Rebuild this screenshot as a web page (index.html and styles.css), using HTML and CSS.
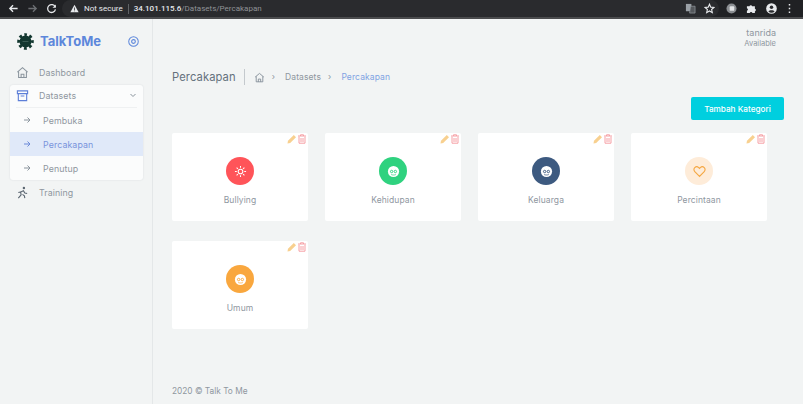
FILE: index.html
```html
<!DOCTYPE html>
<html>
<head>
    <title>TalkToMe</title>
    <link rel="stylesheet" href="styles.css">
</head>
<body>
    <div class="chrome">
        <svg class="nav-icon" viewBox="0 0 12 12"><path d="M10.500 6H2M5.500 2.500 2 6l3.500 3.500" fill="none" stroke="#e8eaed" stroke-width="1.500"/></svg>
        <svg class="nav-icon" viewBox="0 0 12 12"><path d="M1.500 6H10M6.500 2.500 10 6l-3.500 3.500" fill="none" stroke="#6b6e72" stroke-width="1.500"/></svg>
        <svg class="nav-icon" viewBox="0 0 12 12"><path d="M10 4.200A4.300 4.300 0 1 0 10.300 7" fill="none" stroke="#e8eaed" stroke-width="1.400"/><path d="M10.800 1.500v3.700H7.100z" fill="#e8eaed"/></svg>
        <div class="omnibox">
            <svg class="warn" viewBox="0 0 12 12"><path d="M6 1 11.500 11H.5z" fill="#e8eaed"/><path d="M5.500 4.500h1v3.500h-1zM5.500 8.800h1v1h-1z" fill="#2a2b2e"/></svg>
            <span class="not-secure">Not secure</span>
            <span class="omni-sep"></span>
            <span class="host">34.101.115.6</span><span class="path">/Datasets/Percakapan</span>
            <span class="omni-right">
                <svg class="chrome-icon" viewBox="0 0 12 12"><path d="M1 1h6v8H1z" fill="#9aa0a6"/><path d="M6 3.500h5V11H5z" fill="#55585c" stroke="#9aa0a6" stroke-width=".7"/></svg>
                <svg class="chrome-icon" viewBox="0 0 12 12"><path d="m6 1.300 1.400 3.200 3.500.3-2.600 2.300.8 3.400L6 8.700l-3.100 1.800.8-3.400-2.600-2.300 3.500-.3z" fill="none" stroke="#e8eaed" stroke-width="1.200"/></svg>
            </span>
        </div>
        <div class="chrome-tools">
            <svg class="chrome-icon" viewBox="0 0 12 12"><circle cx="6" cy="6" r="5.500" fill="#8b8e92"/><rect x="4" y="3.500" width="5" height="5" rx="1" fill="#e3e4e6"/></svg>
            <svg class="chrome-icon" viewBox="0 0 12 12"><path d="M1 3.500h2.800a1.500 1.500 0 0 1 2.900 0h3v2.800a1.500 1.500 0 0 1 0 2.900V11H7a1.500 1.500 0 0 0-2.900 0H1V8.500a1.500 1.500 0 0 0 0-2.900z" fill="#e8eaed"/></svg>
            <svg class="chrome-icon" viewBox="0 0 12 12"><circle cx="6" cy="6" r="5.800" fill="#e8eaed"/><circle cx="6" cy="4.600" r="1.900" fill="#2a2b2e"/><path d="M2.600 9.200c1-1.700 5.800-1.700 6.800 0a4.500 4.500 0 0 1-6.800 0z" fill="#2a2b2e"/></svg>
            <svg class="chrome-icon dots" viewBox="0 0 12 12"><path d="M5.200 1h1.600v1.800H5.200zM5.200 5.100h1.600v1.800H5.200zM5.200 9.200h1.600V11H5.200z" fill="#e8eaed"/></svg>
        </div>
    </div>

    <div class="app">
        <aside class="sidebar">
            <div class="brand">
                <svg class="logo" viewBox="0 0 20 20"><circle cx="10" cy="10" r="7" fill="#12372f"/><circle cx="10" cy="10" r="8" fill="none" stroke="#12372f" stroke-width="3.500" stroke-dasharray="3.300 2.980" stroke-dashoffset="1.650" transform="rotate(-90 10 10)"/><path d="M6.500 10h7" stroke="#4d6d64" stroke-width=".8"/></svg>
                <span class="brand-name">TalkToMe</span>
                <svg class="brand-toggle" viewBox="0 0 12 12"><circle cx="6" cy="6" r="5.200" fill="none" stroke="#5d87db" stroke-width="1.100"/><circle cx="6" cy="6" r="2" fill="none" stroke="#5d87db" stroke-width="1.200"/></svg>
            </div>
            <a class="side-link">
                <svg class="side-icon" viewBox="0 0 14 14"><path d="M1.500 6.500 7 1.800l5.500 4.700M2.800 5.500v7h8.400v-7M5.500 12.500V9h3v3.500" fill="none" stroke="#8a949d" stroke-width="1.100"/></svg>
                Dashboard
            </a>
            <div class="side-group">
                <div class="group-head">
                    <svg class="side-icon" viewBox="0 0 14 14"><path d="M1.500 2h11v3h-11zM2.500 5v7.500h9V5M5 7.500h4" fill="none" stroke="#5d7fd8" stroke-width="1.200"/></svg>
                    <span class="group-title">Datasets</span>
                    <svg class="chevron" viewBox="0 0 8 8"><path d="m1.500 3 2.500 2.500L6.500 3" fill="none" stroke="#8a949d" stroke-width="1"/></svg>
                </div>
                <a class="sub-link"><svg class="arrow" viewBox="0 0 8 8"><path d="M1 4h6M4.500 1.500 7 4 4.500 6.500" fill="none" stroke="#8a949d" stroke-width="1"/></svg>Pembuka</a>
                <a class="sub-link active"><svg class="arrow" viewBox="0 0 8 8"><path d="M1 4h6M4.500 1.500 7 4 4.500 6.500" fill="none" stroke="#6b89d8" stroke-width="1"/></svg>Percakapan</a>
                <a class="sub-link"><svg class="arrow" viewBox="0 0 8 8"><path d="M1 4h6M4.500 1.500 7 4 4.500 6.500" fill="none" stroke="#8a949d" stroke-width="1"/></svg>Penutup</a>
            </div>
            <a class="side-link">
                <svg class="side-icon" viewBox="0 0 14 14"><circle cx="8.500" cy="2.200" r="1.300" fill="#5a6570"/><path d="M2.500 13 5.500 9.500l-.5-3 3-1.500 1.500 2.500 2.500.5M7 9l2 1.500.5 2.500M5 6.500l-2.500.5" fill="none" stroke="#5a6570" stroke-width="1.200"/></svg>
                Training
            </a>
        </aside>

        <main class="content">
            <div class="user">
                <div class="user-name">tanrida</div>
                <div class="user-status">Available</div>
            </div>
            <div class="crumbs">
                <h1 class="page-title">Percakapan</h1>
                <svg class="crumb-home" viewBox="0 0 14 14"><path d="M1.500 6.500 7 1.800l5.500 4.700M2.800 5.500v7h8.400v-7M5.500 12.500V9h3v3.500" fill="none" stroke="#7f8a94" stroke-width="1.100"/></svg>
                <span class="crumb-sep">&rsaquo;</span>
                <span class="crumb">Datasets</span>
                <span class="crumb-sep">&rsaquo;</span>
                <span class="crumb current">Percakapan</span>
            </div>
            <div class="actions">
                <button class="btn-add">Tambah Kategori</button>
            </div>
            <div class="cards">
                <div class="card">
                    <div class="card-tools">
                        <svg class="tool" viewBox="0 0 10 10"><path d="M.5 9.500 1 6.800 6.800 1l2.200 2.200L3.200 9z" fill="#f8d08f"/></svg>
                        <svg class="tool" viewBox="0 0 10 10"><path d="M1 2h8M3.500 2V.8h3V2M2 2.800v6.400h6V2.800M4 4v4M6 4v4" fill="none" stroke="#f6a0a5" stroke-width="1"/></svg>
                    </div>
                    <div class="badge red">
                        <svg class="badge-icon" viewBox="0 0 14 14"><circle cx="7" cy="7" r="2.500" fill="none" stroke="#fff" stroke-width="1.100"/><path d="M7 1v2M7 11v2M1 7h2M11 7h2M2.800 2.800l1.400 1.400M9.800 9.800l1.400 1.400M2.800 11.200l1.400-1.400M9.800 4.200l1.400-1.400" stroke="#fff" stroke-width="1.100"/></svg>
                    </div>
                    <div class="card-label">Bullying</div>
                </div>
                <div class="card">
                    <div class="card-tools">
                        <svg class="tool" viewBox="0 0 10 10"><path d="M.5 9.500 1 6.800 6.800 1l2.200 2.200L3.200 9z" fill="#f8d08f"/></svg>
                        <svg class="tool" viewBox="0 0 10 10"><path d="M1 2h8M3.500 2V.8h3V2M2 2.800v6.400h6V2.800M4 4v4M6 4v4" fill="none" stroke="#f6a0a5" stroke-width="1"/></svg>
                    </div>
                    <div class="badge green">
                        <svg class="badge-icon" viewBox="0 0 14 14"><circle cx="7" cy="7" r="6" fill="#fff"/><circle cx="5" cy="7" r="1.300" fill="none" stroke="#2fd27f"/><circle cx="9" cy="7" r="1.300" fill="none" stroke="#2fd27f"/><path d="M4.500 10.300c1.500.6 3.500.6 5 0" fill="none" stroke="#2fd27f" stroke-width=".8"/></svg>
                    </div>
                    <div class="card-label">Kehidupan</div>
                </div>
                <div class="card">
                    <div class="card-tools">
                        <svg class="tool" viewBox="0 0 10 10"><path d="M.5 9.500 1 6.800 6.800 1l2.200 2.200L3.200 9z" fill="#f8d08f"/></svg>
                        <svg class="tool" viewBox="0 0 10 10"><path d="M1 2h8M3.500 2V.8h3V2M2 2.800v6.400h6V2.800M4 4v4M6 4v4" fill="none" stroke="#f6a0a5" stroke-width="1"/></svg>
                    </div>
                    <div class="badge navy">
                        <svg class="badge-icon" viewBox="0 0 14 14"><circle cx="7" cy="7" r="6" fill="#fff"/><circle cx="5" cy="7" r="1.300" fill="none" stroke="#3d5a80"/><circle cx="9" cy="7" r="1.300" fill="none" stroke="#3d5a80"/><path d="M4.500 10.300c1.500.6 3.500.6 5 0" fill="none" stroke="#3d5a80" stroke-width=".8"/></svg>
                    </div>
                    <div class="card-label">Keluarga</div>
                </div>
                <div class="card">
                    <div class="card-tools">
                        <svg class="tool" viewBox="0 0 10 10"><path d="M.5 9.500 1 6.800 6.800 1l2.200 2.200L3.200 9z" fill="#f8d08f"/></svg>
                        <svg class="tool" viewBox="0 0 10 10"><path d="M1 2h8M3.500 2V.8h3V2M2 2.800v6.400h6V2.800M4 4v4M6 4v4" fill="none" stroke="#f6a0a5" stroke-width="1"/></svg>
                    </div>
                    <div class="badge peach">
                        <svg class="badge-icon" viewBox="0 0 14 14"><path d="M7 12.300 1.900 7.100a3 3 0 0 1 0-4.300 3 3 0 0 1 4.200 0l.9.900.9-.9a3 3 0 0 1 4.200 0 3 3 0 0 1 0 4.300z" fill="none" stroke="#f5a742" stroke-width="1.200"/></svg>
                    </div>
                    <div class="card-label">Percintaan</div>
                </div>
                <div class="card">
                    <div class="card-tools">
                        <svg class="tool" viewBox="0 0 10 10"><path d="M.5 9.500 1 6.800 6.800 1l2.200 2.200L3.200 9z" fill="#f8d08f"/></svg>
                        <svg class="tool" viewBox="0 0 10 10"><path d="M1 2h8M3.500 2V.8h3V2M2 2.800v6.400h6V2.800M4 4v4M6 4v4" fill="none" stroke="#f6a0a5" stroke-width="1"/></svg>
                    </div>
                    <div class="badge orange">
                        <svg class="badge-icon" viewBox="0 0 14 14"><circle cx="7" cy="7" r="6" fill="#fff"/><circle cx="5" cy="7" r="1.300" fill="none" stroke="#f9a73e"/><circle cx="9" cy="7" r="1.300" fill="none" stroke="#f9a73e"/><path d="M4.500 10.300c1.500.6 3.500.6 5 0" fill="none" stroke="#f9a73e" stroke-width=".8"/></svg>
                    </div>
                    <div class="card-label">Umum</div>
                </div>
            </div>
            <footer class="footer">2020 &copy; Talk To Me</footer>
        </main>
    </div>
</body>
</html>
```

FILE: styles.css
```css
* {
    box-sizing: border-box;
}
html, body {
    height: 100%;
}
body {
    margin: 0;
    overflow: hidden;
    font-family: "Inter", "Liberation Sans", sans-serif;
    background-color: #f2f4f4;
    color: #8f979f;
}

/* browser bar */
.chrome {
    height: 19px;
    display: flex;
    align-items: center;
    padding-left: 8px;
    background-color: #202124;
    border-bottom: 2px solid #4b4c4e;
}
.nav-icon {
    width: 11px;
    height: 11px;
    margin-right: 8px;
}
.omnibox {
    width: 657px;
    height: 17px;
    display: flex;
    align-items: center;
    margin-left: -3px;
    padding-left: 8px;
    background-color: #2a2b2e;
    border-radius: 9px;
    font-family: "Roboto", "Liberation Sans", sans-serif;
    font-size: 8px;
}
.warn {
    width: 9px;
    height: 9px;
    margin-right: 5px;
}
.not-secure {
    color: #e8eaed;
}
.omni-sep {
    width: 1px;
    height: 10px;
    margin: 0 5px;
    background-color: #606366;
}
.host {
    color: #e8eaed;
    font-weight: 500;
}
.path {
    color: #8f9296;
}
.omni-right {
    display: flex;
    align-items: center;
    gap: 8px;
    margin-left: auto;
    padding-right: 4px;
}
.chrome-icon {
    width: 11px;
    height: 11px;
    display: block;
}
.chrome-tools {
    display: flex;
    align-items: center;
    gap: 9px;
    margin-left: 7px;
}
.chrome-icon.dots {
    margin-left: -2px;
}

/* layout */
.app {
    display: flex;
    height: 385px;
}
.sidebar {
    width: 153px;
    flex-shrink: 0;
    padding: 12px 9px 0 10px;
    border-right: 1px solid #e4e7e8;
}
.content {
    flex: 1;
    display: flex;
    flex-direction: column;
    padding: 0 19px;
}

/* sidebar */
.brand {
    display: flex;
    align-items: center;
    height: 20px;
    padding-left: 7px;
    margin-bottom: 11px;
}
.logo {
    width: 17px;
    height: 17px;
    margin-right: 6px;
}
.brand-name {
    font-size: 13px;
    font-weight: 700;
    color: #5d87db;
}
.brand-toggle {
    width: 11px;
    height: 11px;
    margin-left: auto;
    margin-right: 4px;
}
.side-link {
    display: flex;
    align-items: center;
    height: 21px;
    padding-left: 6px;
    font-size: 8.800px;
    letter-spacing: .1px;
}
.side-icon {
    width: 13px;
    height: 13px;
    margin-right: 10px;
}
.side-group {
    margin: 2px 0;
    background-color: #fbfcfc;
    border-radius: 3px;
    box-shadow: 0 0 2px rgba(40, 60, 80, .12);
}
.group-head {
    display: flex;
    align-items: center;
    height: 23px;
    margin: 0 6px;
    padding-bottom: 2px;
    border-bottom: 1px solid #eff1f2;
    font-size: 8.800px;
    letter-spacing: .1px;
}
.group-title {
    flex: 1;
}
.chevron {
    width: 8px;
    height: 8px;
}
.sub-link {
    display: flex;
    align-items: center;
    height: 24px;
    padding-left: 13px;
    font-size: 8.800px;
    letter-spacing: .1px;
}
.sub-link.active {
    background-color: #e0e9f9;
    color: #7a94dc;
}
.arrow {
    width: 8px;
    height: 8px;
    margin-right: 12px;
}

/* top of main */
.user {
    height: 25px;
    margin-top: 8px;
    padding-right: 8px;
    text-align: right;
}
.user-name {
    font-size: 9px;
    line-height: 11px;
}
.user-status {
    font-size: 7.500px;
    line-height: 11px;
}
.crumbs {
    display: flex;
    align-items: center;
    height: 16px;
    margin-top: 17px;
    font-size: 8.500px;
    letter-spacing: .1px;
}
.page-title {
    margin: 0;
    padding-right: 8px;
    border-right: 1px solid #c4c9cd;
    font-size: 11.200px;
    font-weight: 400;
    line-height: 16px;
    color: #65717d;
}
.crumb-home {
    width: 11px;
    height: 11px;
    margin-left: 9px;
}
.crumb-sep {
    margin: 0 10px 0 7px;
}
.crumb.current {
    color: #7fa3e3;
}
.actions {
    display: flex;
    justify-content: flex-end;
    height: 23px;
    margin-top: 12px;
}
.btn-add {
    width: 93px;
    height: 23px;
    padding: 0;
    border: none;
    border-radius: 2px;
    background-color: #00cfdf;
    color: #fff;
    font-family: inherit;
    font-size: 8.200px;
    font-weight: 500;
}

/* cards */
.cards {
    display: grid;
    grid-template-columns: repeat(4, 136px);
    column-gap: 17px;
    row-gap: 20px;
    margin-top: 13px;
}
.card {
    height: 88px;
    display: flex;
    flex-direction: column;
    align-items: center;
    padding-top: 24px;
    position: relative;
    background-color: #fff;
    border-radius: 2px;
}
.card-tools {
    position: absolute;
    top: 1px;
    right: 1px;
    display: flex;
    gap: 0;
}
.tool {
    width: 10px;
    height: 10px;
    display: block;
}
.badge {
    width: 28px;
    height: 28px;
    display: flex;
    align-items: center;
    justify-content: center;
    border-radius: 50%;
}
.badge.red { background-color: #ff5459; }
.badge.green { background-color: #2fd27f; }
.badge.navy { background-color: #3d5a80; }
.badge.peach { background-color: #feecd9; }
.badge.orange { background-color: #f9a73e; }
.badge-icon {
    width: 13px;
    height: 13px;
}
.card-label {
    margin-top: 9px;
    font-size: 8.500px;
    letter-spacing: .1px;
    line-height: 12px;
}
.footer {
    margin-top: auto;
    margin-bottom: 7px;
    font-size: 8.300px;
    line-height: 12px;
}
```
